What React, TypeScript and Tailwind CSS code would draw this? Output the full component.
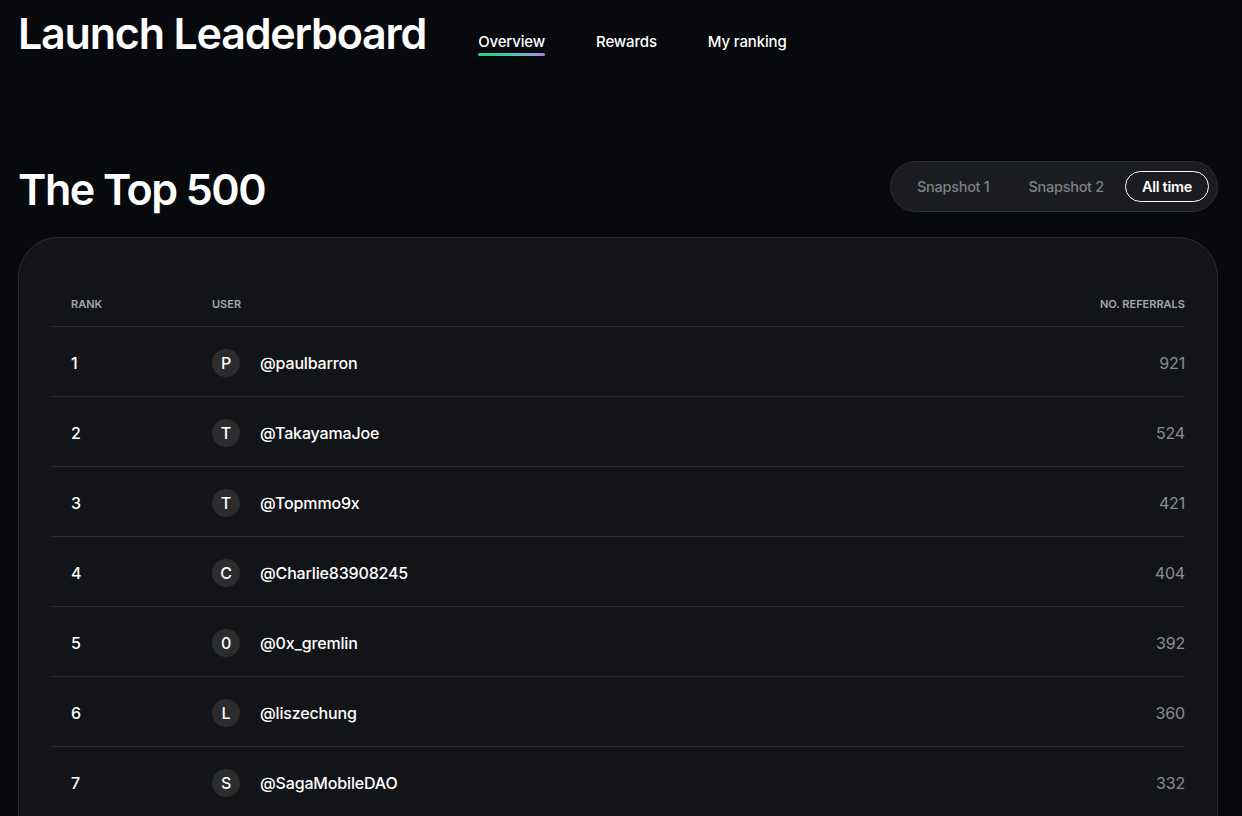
import React, { useState } from 'react'

type rowTypes = {
  rank: number,
  user: string,
  referrals: number
}

const rows: rowTypes[] = [
  { rank: 1, user: 'paulbarron', referrals: 921 },
  { rank: 2, user: 'TakayamaJoe', referrals: 524 },
  { rank: 3, user: 'Topmmo9x', referrals: 421 },
  { rank: 4, user: 'Charlie83908245', referrals: 404 },
  { rank: 5, user: '0x_gremlin', referrals: 392 },
  { rank: 6, user: 'liszechung', referrals: 360 },
  { rank: 7, user: 'SagaMobileDAO', referrals: 332 },
]

const tabs = ['Overview', 'Rewards', 'My ranking']
const snapshots = ['Snapshot 1', 'Snapshot 2', 'All time']

const App = () => {
  const [tab, setTab] = useState('Overview')
  const [snap, setSnap] = useState('All time')

  return (
    <div className="min-h-screen w-full bg-[#08090d] text-white px-[18px] overflow-hidden" style={{ fontFamily: 'Inter, "Noto Sans", sans-serif' }}>
      {/* top bar */}
      <div className="flex flex-row items-start pt-[9px] h-[161px]">
        <h1 className="text-[43px] leading-[48px] font-semibold tracking-[-0.028em]">Launch Leaderboard</h1>
        <div className="flex flex-row gap-[51px] ml-[52px] pt-[23px]">
          {tabs.map((t) => (
            <button key={t} onClick={() => setTab(t)} className="flex flex-col items-stretch text-[15px] leading-[20px] font-medium tracking-[-0.01em] text-white">
              <span>{t}</span>
              <span className={tab === t ? 'mt-[1px] h-[3px] rounded-full bg-gradient-to-r from-[#2fd07a] via-[#3fc6b0] to-[#a77bf3]' : 'mt-[1px] h-[3px]'} />
            </button>
          ))}
        </div>
      </div>

      {/* section head */}
      <div className="flex flex-row items-center justify-between h-[51px] mr-[6px]">
        <h2 className="text-[43px] leading-[48px] font-semibold tracking-[-0.035em] mt-[4px]">The Top 500</h2>
        <div className="flex flex-row items-center h-[51px] rounded-full border border-[#2a2d31] bg-[#1a1c1f] pl-[8px] pr-[8px] gap-[3px]">
          {snapshots.map((s) => (
            <button
              key={s}
              onClick={() => setSnap(s)}
              className={snap === s
                ? 'h-[31px] px-[16px] pt-[1px] rounded-full border border-white text-white text-[14.5px] font-semibold tracking-[-0.02em]'
                : 'h-[31px] px-[17px] pt-[1px] rounded-full border border-transparent text-[#7c8089] text-[14.5px] font-medium tracking-[-0.02em]'}
            >
              {s}
            </button>
          ))}
        </div>
      </div>

      {/* table card */}
      <div className="mt-[25px] mr-[6px] rounded-[40px] border border-[#2a2c30] bg-[#131417] px-[32px] pt-[44px] pb-[40px]">
        <div className="grid grid-cols-[161px_1fr_200px] items-center h-[45px] border-b border-[#2a2c30] text-[11px] font-semibold text-[#a3a6ad] uppercase">
          <p className="pl-[20px]">Rank</p>
          <p>User</p>
          <p className="text-right">No. Referrals</p>
        </div>
        {rows.map((r) => (
          <div key={r.rank} className="grid grid-cols-[161px_1fr_200px] items-center h-[70px] pt-[2px] border-b border-[#2a2c30] text-[16px] tracking-[-0.01em]">
            <p className="pl-[20px] font-medium">{r.rank}</p>
            <div className="flex flex-row items-center gap-[20px]">
              <div className="w-[28px] h-[28px] rounded-full bg-[#2c2c2f] flex items-center justify-center text-[16px] font-medium">
                {r.user[0].toUpperCase()}
              </div>
              <p className="font-medium">@{r.user}</p>
            </div>
            <p className="text-right text-[#8a8d94]">{r.referrals}</p>
          </div>
        ))}
      </div>
    </div>
  )
}

export default App
